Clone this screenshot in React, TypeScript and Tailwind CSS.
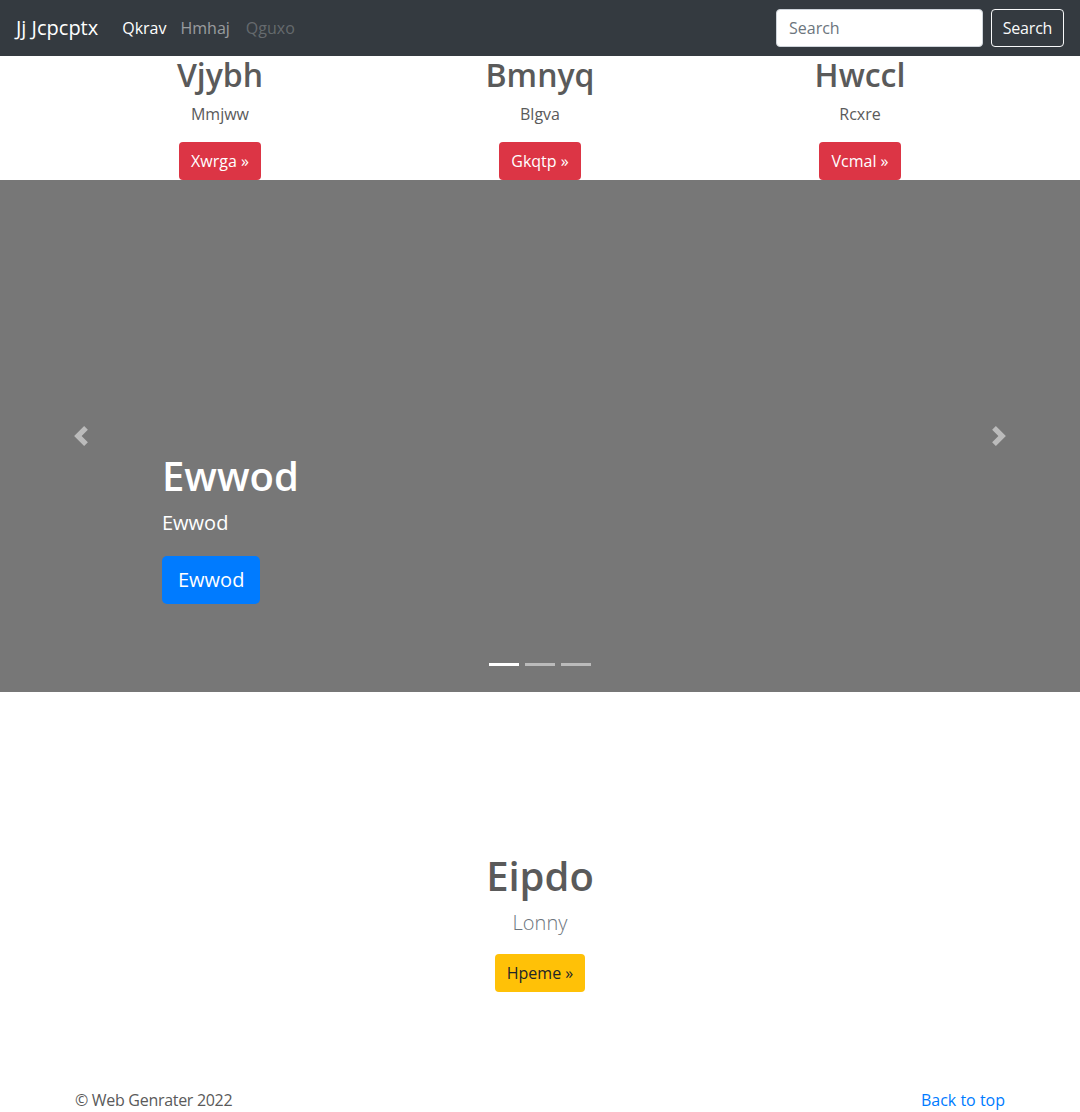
const font = { fontFamily: '"Open Sans", "Noto Sans", sans-serif' };

const features = [
  { title: "Vjybh", text: "Mmjww", cta: "Xwrga" },
  { title: "Bmnyq", text: "Blgva", cta: "Gkqtp" },
  { title: "Hwccl", text: "Rcxre", cta: "Vcmal" },
];

const Chevron = ({ dir }: { dir: "prev" | "next" }) => (
  <svg width="20" height="20" viewBox="0 0 8 8" className="opacity-50" fill="#fff">
    {dir === "prev" ? (
      <path d="M5.25 0l-4 4 4 4 1.5-1.5L4.25 4l2.5-2.5L5.25 0z" />
    ) : (
      <path d="M2.75 0l-1.5 1.5L3.75 4l-2.5 2.5L2.75 8l4-4-4-4z" />
    )}
  </svg>
);

const App = () => {
  return (
    <div className="min-h-screen bg-white text-[#5a5a5a]" style={font}>
      {/* navbar */}
      <nav className="h-14 bg-[#343a40] flex items-center px-4">
        <a className="text-xl text-white mr-4 leading-[30px]">Jj Jcpcptx</a>
        <div className="flex items-center text-base">
          <a className="px-2 text-white">Qkrav</a>
          <a className="pl-[6px] pr-2 text-white/50">Hmhaj</a>
          <a className="px-2 text-white/25">Qguxo</a>
        </div>
        <div className="ml-auto flex items-center gap-2">
          <input
            placeholder="Search"
            className="w-[207px] h-[38px] bg-white border border-[#ced4da] rounded px-3 text-base text-[#495057] placeholder:text-[#6c757d] outline-none"
            style={font}
          />
          <button className="w-[73px] h-[38px] border border-[#f8f9fa] rounded text-[#f8f9fa] text-base tracking-[-0.2px]">
            Search
          </button>
        </div>
      </nav>

      {/* marketing row */}
      <div className="w-[960px] mx-auto grid grid-cols-3">
        {features.map((f) => (
          <div key={f.title} className="px-[15px] flex flex-col items-center text-center">
            <h2 className="text-[32px] font-semibold leading-[1.2] mb-2">{f.title}</h2>
            <p className="text-base leading-6 mb-4">{f.text}</p>
            <button className="h-[38px] px-3 rounded bg-[#dc3545] text-white text-base">
              {f.cta} &raquo;
            </button>
          </div>
        ))}
      </div>

      {/* carousel */}
      <div className="relative h-[512px] bg-[#777777] flex flex-col justify-end px-[15%] pb-[88px] text-white">
        <h1 className="text-[40px] font-semibold leading-[48px] mb-2">Ewwod</h1>
        <p className="text-xl leading-[30px] mb-[18px]">Ewwod</p>
        <div>
          <button className="h-12 px-4 rounded-[5px] bg-[#007bff] text-white text-xl">Ewwod</button>
        </div>

        <a className="absolute left-0 top-0 bottom-0 w-[15%] flex items-center justify-center">
          <Chevron dir="prev" />
        </a>
        <a className="absolute right-0 top-0 bottom-0 w-[15%] flex items-center justify-center">
          <Chevron dir="next" />
        </a>

        <div className="absolute left-0 right-0 bottom-[26px] flex justify-center gap-[6px]">
          <span className="w-[30px] h-[3px] bg-white" />
          <span className="w-[30px] h-[3px] bg-white opacity-50" />
          <span className="w-[30px] h-[3px] bg-white opacity-50" />
        </div>
      </div>

      {/* jumbotron */}
      <section className="pt-[160px] pb-16 flex flex-col items-center text-center">
        <h1 className="text-[40px] font-semibold leading-[48px] mb-2">Eipdo</h1>
        <p className="text-xl font-light leading-[30px] mb-4 text-[#6c757d]">Lonny</p>
        <button className="h-[38px] px-3 rounded bg-[#ffc107] text-[#212529] text-base">
          Hpeme &raquo;
        </button>
      </section>

      {/* footer */}
      <footer className="w-[930px] mx-auto py-8 flex justify-between text-base leading-6">
        <p className="tracking-[-0.3px]">&copy; Web Genrater 2022</p>
        <a className="text-[#007bff]">Back to top</a>
      </footer>
    </div>
  );
};

export default App;
